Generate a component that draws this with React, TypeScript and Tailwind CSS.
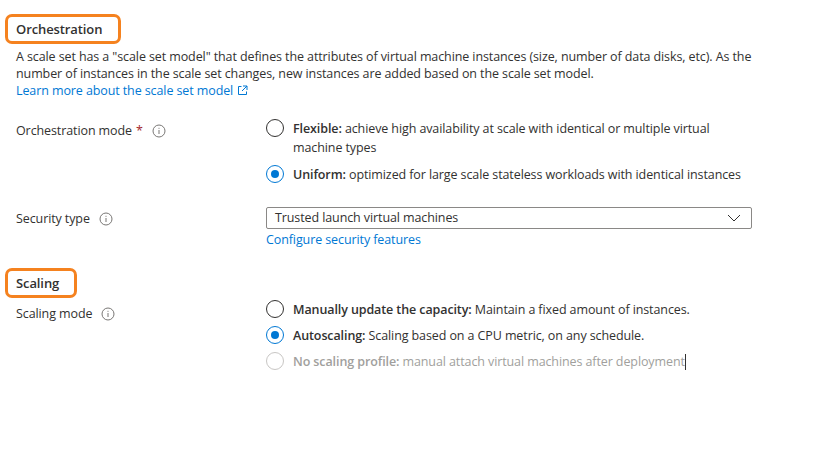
import type { ReactNode } from 'react';

function InfoIcon() {
  return (
    <svg width="14" height="14" viewBox="0 0 14 14" className="shrink-0">
      <circle cx="7" cy="7" r="6" fill="none" stroke="#797775" strokeWidth="1" />
      <rect x="6.5" y="6" width="1" height="4" fill="#797775" />
      <rect x="6.5" y="3.8" width="1" height="1" fill="#797775" />
    </svg>
  );
}

function ExternalIcon() {
  return (
    <svg width="11" height="11" viewBox="0 0 11 11" className="inline-block ml-1 -mt-0.5">
      <path d="M4.5 1.5H1.5v8h8V6.5" fill="none" stroke="#0078d4" strokeWidth="1" />
      <path d="M6 1h4v4M10 1L5 6" fill="none" stroke="#0078d4" strokeWidth="1" />
    </svg>
  );
}

function Radio({ checked, disabled }: { checked?: boolean; disabled?: boolean }) {
  const border = disabled ? 'border-[#c8c6c4]' : checked ? 'border-[#0078d4]' : 'border-[#323130]';
  return (
    <span
      className={`w-[18px] h-[18px] rounded-full border ${border} flex items-center justify-center shrink-0 bg-white`}
    >
      {checked && <span className="w-[8px] h-[8px] rounded-full bg-[#0078d4]" />}
    </span>
  );
}

function Heading({ children, boxWidth }: { children: ReactNode; boxWidth: string }) {
  return (
    <div className="relative h-[20px] leading-[20px] font-semibold text-[13px] text-[#323130]">
      <span
        className={`absolute -left-[11px] -top-[5px] h-[30px] ${boxWidth} border-[3px] border-[#f5821f] rounded-[7px]`}
      />
      {children}
    </div>
  );
}

function Label({ text, required }: { text: string; required?: boolean }) {
  return (
    <div className="flex items-center gap-[9px] h-[18px]">
      <span>
        {text}
        {required && <span className="text-[#a4262c] ml-1">*</span>}
      </span>
      <InfoIcon />
    </div>
  );
}

function Option({
  checked,
  disabled,
  bold,
  rest,
}: {
  checked?: boolean;
  disabled?: boolean;
  bold: string;
  rest: ReactNode;
}) {
  return (
    <div className={`flex items-start gap-[9px] ${disabled ? 'text-[#a19f9d]' : ''}`}>
      <Radio checked={checked} disabled={disabled} />
      <span className="leading-[19px]">
        <span className="font-semibold">{bold}</span> {rest}
      </span>
    </div>
  );
}

export default function App() {
  return (
    <div
      className="w-[819px] h-[460px] bg-white text-[12.5px] tracking-[-0.1px] text-[#323130] px-4 pt-[19px]"
      style={{ fontFamily: '"Open Sans", "Noto Sans", sans-serif' }}
    >
      <Heading boxWidth="w-[116px]">Orchestration</Heading>

      <div className="mt-[9px] leading-[17px]">
        <div>
          A scale set has a "scale set model" that defines the attributes of virtual machine instances (size,
          number of data disks, etc). As the
        </div>
        <div>number of instances in the scale set changes, new instances are added based on the scale set model.</div>
        <div className="text-[#0078d4]">
          Learn more about the scale set model
          <ExternalIcon />
        </div>
      </div>

      <div className="grid grid-cols-[250px_1fr] mt-[20px]">
        <div className="pt-[3px]">
          <Label text="Orchestration mode" required />
        </div>
        <div className="flex flex-col gap-[8px]">
          <Option
            bold="Flexible:"
            rest={
              <>
                achieve high availability at scale with identical or multiple virtual
                <br />
                machine types
              </>
            }
          />
          <Option checked bold="Uniform:" rest="optimized for large scale stateless workloads with identical instances" />
        </div>
      </div>

      <div className="grid grid-cols-[250px_1fr] mt-[23px]">
        <div className="pt-[3px]">
          <Label text="Security type" />
        </div>
        <div className="w-[486px]">
          <div className="h-[22px] border border-[#8a8886] rounded-[2px] flex items-center justify-between pl-[8px] pr-[10px]">
            <span>Trusted launch virtual machines</span>
            <svg width="14" height="8" viewBox="0 0 14 8">
              <path d="M1 1l6 6 6-6" fill="none" stroke="#323130" strokeWidth="1" />
            </svg>
          </div>
          <div className="text-[#0078d4] mt-[2px] leading-[18px]">Configure security features</div>
        </div>
      </div>

      <div className="mt-[24px]">
        <Heading boxWidth="w-[72px]">Scaling</Heading>
      </div>

      <div className="grid grid-cols-[250px_1fr] mt-[7px]">
        <div className="pt-[5px]">
          <Label text="Scaling mode" />
        </div>
        <div className="flex flex-col gap-[7px]">
          <Option bold="Manually update the capacity:" rest="Maintain a fixed amount of instances." />
          <Option checked bold="Autoscaling:" rest="Scaling based on a CPU metric, on any schedule." />
          <Option
            disabled
            bold="No scaling profile:"
            rest={
              <>
                manual attach virtual machines after deployment
                <span className="inline-block w-px h-[16px] bg-[#323130] align-middle -mt-[2px]" />
              </>
            }
          />
        </div>
      </div>
    </div>
  );
}
